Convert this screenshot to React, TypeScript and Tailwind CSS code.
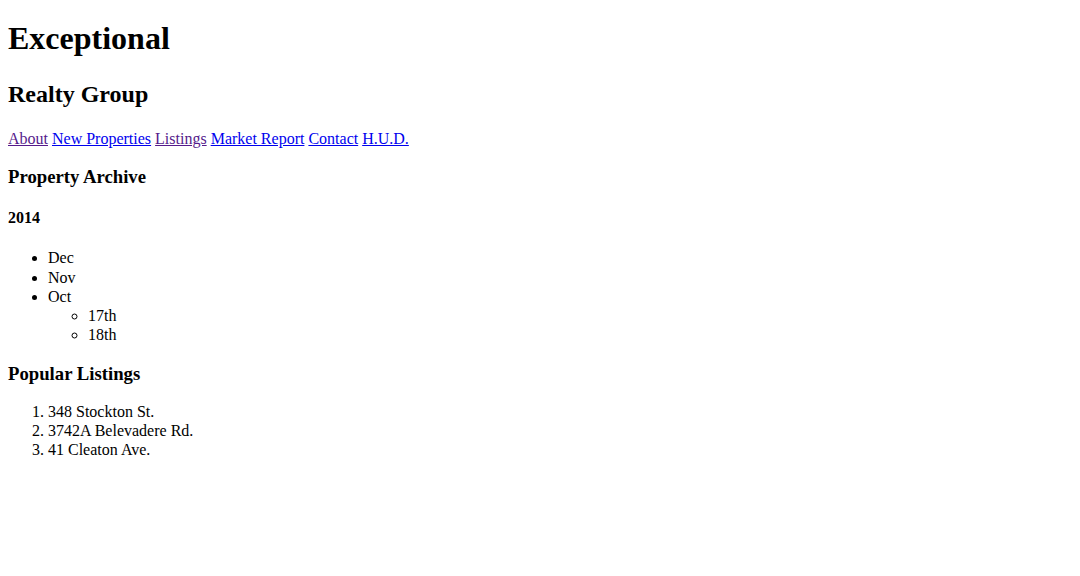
const links = [
  { label: "About", visited: true },
  { label: "New Properties", visited: false },
  { label: "Listings", visited: true },
  { label: "Market Report", visited: false },
  { label: "Contact", visited: false },
  { label: "H.U.D.", visited: false },
];

const popular = ["348 Stockton St.", "3742A Belevadere Rd.", "41 Cleaton Ave."];

export default function App() {
  return (
    <div className="min-h-screen bg-white px-2 pt-[19px] text-black font-['Liberation_Serif','Times_New_Roman',serif]">
      <h1 className="text-[32px] font-bold leading-[38.4px]">Exceptional</h1>
      <h2 className="mt-[23px] text-[24px] font-bold leading-[28.8px]">Realty Group</h2>
      <p className="mt-[20px] text-[16px] leading-[19.2px]">
        {links.map((l, i) => (
          <span key={l.label}>
            <a
              href="#"
              className={l.visited ? "text-[#551a8b] underline" : "text-[#0000ee] underline"}
            >
              {l.label}
            </a>
            {i < links.length - 1 ? " " : ""}
          </span>
        ))}
      </p>
      <h3 className="mt-[18px] text-[18.72px] font-bold leading-[22.46px]">Property Archive</h3>
      <h4 className="mt-[19.5px] text-[16px] font-bold leading-[19.2px]">2014</h4>
      <ul className="mt-[20.8px] list-disc pl-10 text-[16px] leading-[19.2px]">
        <li>Dec</li>
        <li>Nov</li>
        <li>
          Oct
          <ul className="list-[circle] pl-10">
            <li>17th</li>
            <li>18th</li>
          </ul>
        </li>
      </ul>
      <h3 className="mt-[18.25px] text-[18.72px] font-bold leading-[22.46px]">Popular Listings</h3>
      <ol className="mt-[17px] list-decimal pl-10 text-[16px] leading-[19.2px]">
        {popular.map((p) => (
          <li key={p}>{p}</li>
        ))}
      </ol>
    </div>
  );
}
